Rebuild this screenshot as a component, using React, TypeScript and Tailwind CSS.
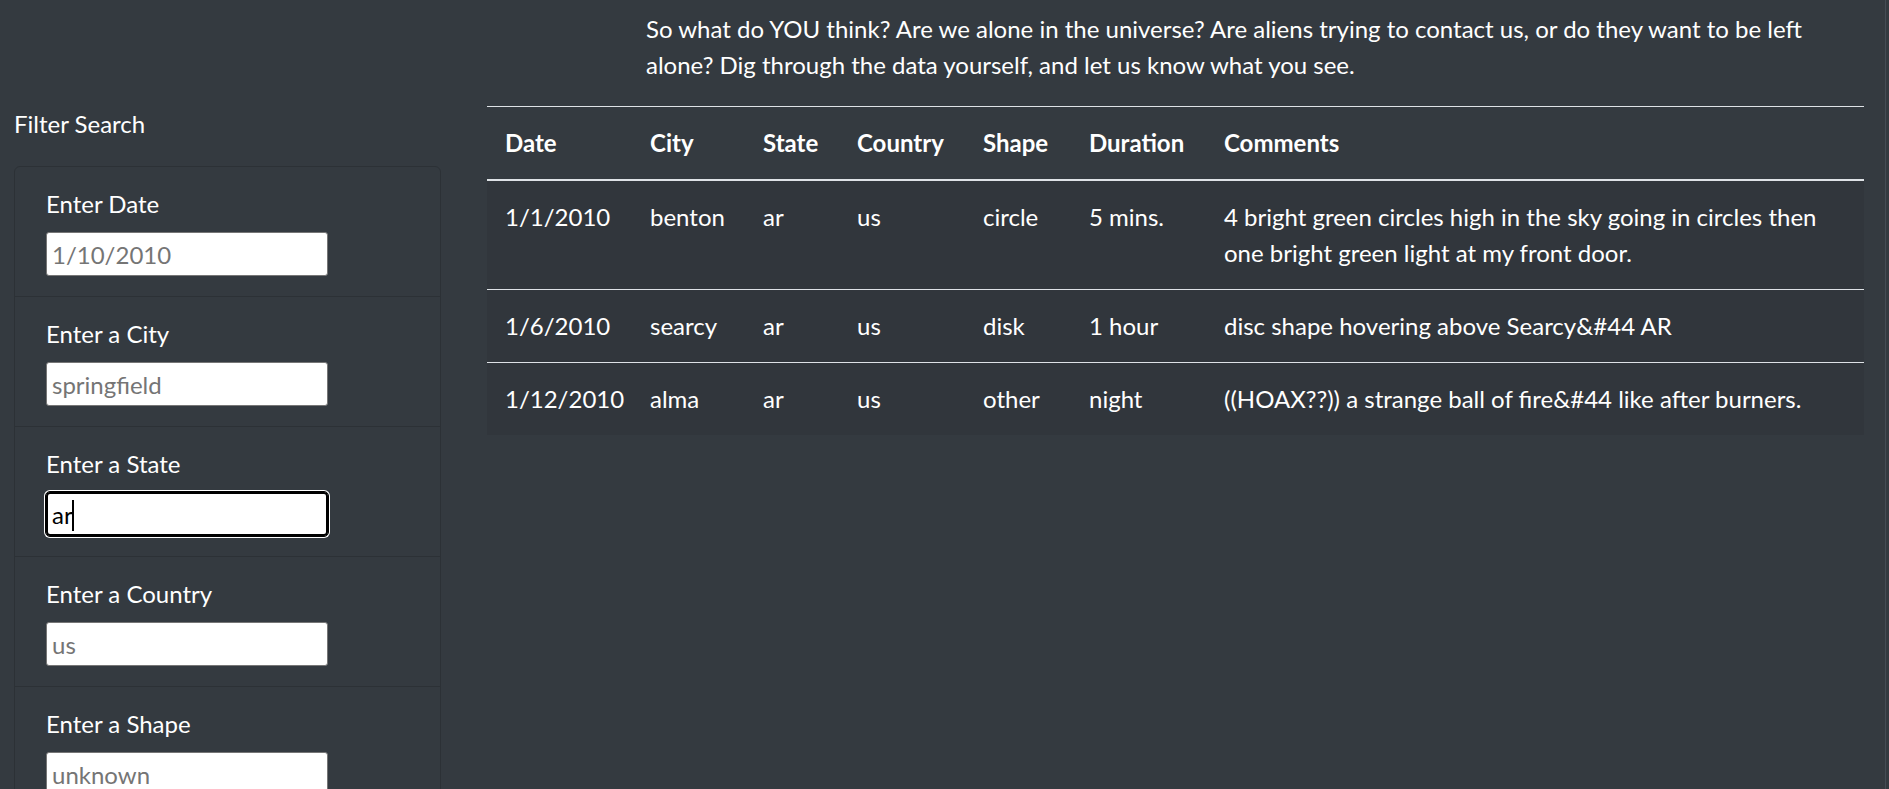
import React from "react";

interface Sighting {
  date: string;
  city: string;
  state: string;
  country: string;
  shape: string;
  duration: string;
  comments: string;
}

const sightings: Sighting[] = [
  {
    date: "1/1/2010",
    city: "benton",
    state: "ar",
    country: "us",
    shape: "circle",
    duration: "5 mins.",
    comments: "4 bright green circles high in the sky going in circles then one bright green light at my front door.",
  },
  {
    date: "1/6/2010",
    city: "searcy",
    state: "ar",
    country: "us",
    shape: "disk",
    duration: "1 hour",
    comments: "disc shape hovering above Searcy&#44 AR",
  },
  {
    date: "1/12/2010",
    city: "alma",
    state: "ar",
    country: "us",
    shape: "other",
    duration: "night",
    comments: "((HOAX??)) a strange ball of fire&#44 like after burners.",
  },
];

const filters = [
  { id: "datetime", label: "Enter Date", placeholder: "1/10/2010" },
  { id: "city", label: "Enter a City", placeholder: "springfield" },
  { id: "state", label: "Enter a State", placeholder: "", value: "ar" },
  { id: "country", label: "Enter a Country", placeholder: "us" },
  { id: "shape", label: "Enter a Shape", placeholder: "unknown" },
];

const FilterItem = ({ id, label, placeholder, value }: { id: string; label: string; placeholder: string; value?: string }) => {
  const focused = value !== undefined;
  return (
    <li className="border-b border-[#2c3136] px-[31px] pt-[19px] pb-[20px] last:border-b-0">
      <label htmlFor={id} className="block leading-[36px]">
        {label}
      </label>
      <div className="relative mt-[10px] w-[282px]">
        <input
          id={id}
          type="text"
          placeholder={placeholder}
          defaultValue={value}
          readOnly={focused}
          className={
            focused
              ? "block h-[44px] w-[282px] rounded-[4px] border-2 border-black bg-white px-[4px] text-[24px] leading-[32px] text-black outline-1 outline-black shadow-[0_0_0_2px_#ffffff]"
              : "block h-[44px] w-[282px] rounded-[3px] border border-[#767676] bg-white px-[5px] text-[24px] leading-[32px] text-black placeholder:text-[#757575] focus:outline-none"
          }
        />
        {focused && <span className="absolute left-[26px] top-[8px] h-[31px] w-[2px] bg-black" />}
      </div>
    </li>
  );
};

export default function App() {
  return (
    <div className="flex min-h-screen bg-[#343a40] font-['Lato','Noto_Sans',sans-serif] text-[24px] leading-[36px] text-white">
      <div className="flex-1">
        <p className="ml-[646px] mb-[23px] w-[1215px] pt-[11px]">
          So what do YOU think? Are we alone in the universe? Are aliens trying to contact us, or do they want to be left
          alone? Dig through the data yourself, and let us know what you see.
        </p>

        <div className="flex items-start gap-[46px] pl-[14px] pr-[21px]">
          <aside className="w-[427px] shrink-0">
            <h2 className="mb-[24px] leading-[36px]">Filter Search</h2>
            <ul className="rounded-[6px] border border-[#2c3136]">
              {filters.map((f) => (
                <FilterItem key={f.id} {...f} />
              ))}
            </ul>
          </aside>

          <table className="w-[1377px] table-fixed border-collapse border-t border-[#dee2e6]">
            <colgroup>
              <col className="w-[145px]" />
              <col className="w-[113px]" />
              <col className="w-[94px]" />
              <col className="w-[126px]" />
              <col className="w-[106px]" />
              <col className="w-[135px]" />
              <col />
            </colgroup>
            <thead>
              <tr className="border-b-2 border-[#dee2e6] text-left">
                {["Date", "City", "State", "Country", "Shape", "Duration", "Comments"].map((h) => (
                  <th key={h} className="p-[18px] align-top font-bold">
                    {h}
                  </th>
                ))}
              </tr>
            </thead>
            <tbody className="bg-[#31363c]">
              {sightings.map((s, i) => (
                <tr key={s.date} className={i > 0 ? "border-t border-[#dee2e6]" : ""}>
                  <td className="p-[18px] align-top">{s.date}</td>
                  <td className="p-[18px] align-top">{s.city}</td>
                  <td className="p-[18px] align-top">{s.state}</td>
                  <td className="p-[18px] align-top">{s.country}</td>
                  <td className="p-[18px] align-top">{s.shape}</td>
                  <td className="p-[18px] align-top">{s.duration}</td>
                  <td className="p-[18px] align-top">{s.comments}</td>
                </tr>
              ))}
            </tbody>
          </table>
        </div>
      </div>
      <div className="w-[4px] shrink-0 border-l border-[#454c54] bg-[#343a40]" />
    </div>
  );
}
